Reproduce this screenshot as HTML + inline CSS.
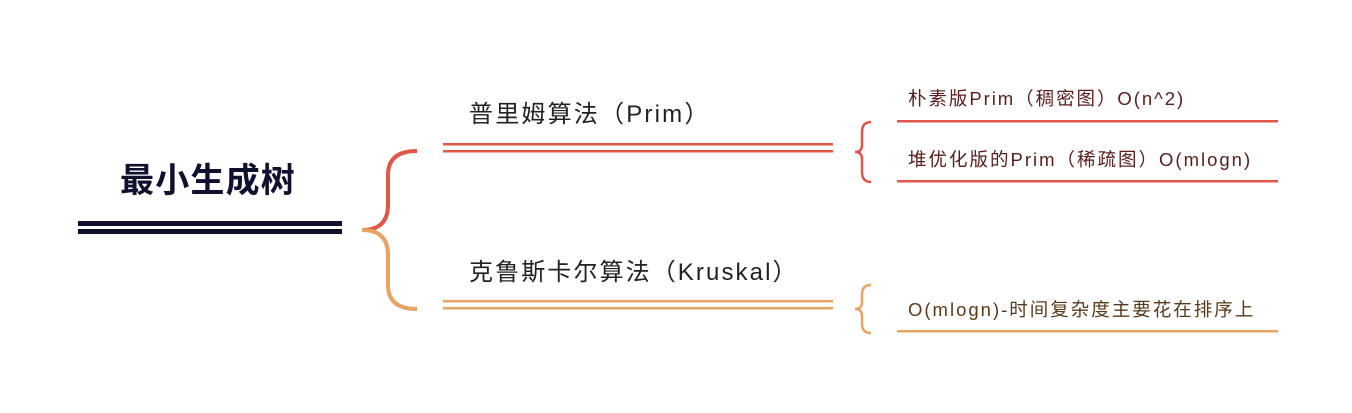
<!DOCTYPE html>
<html><head><meta charset="utf-8"><style>
body{margin:0;width:1352px;height:413px;background:#fff;position:relative;overflow:hidden;font-family:"Liberation Sans","Noto Sans CJK SC",sans-serif}
.t{position:absolute;white-space:nowrap;line-height:1}
</style></head><body>
<svg width="1352" height="413" style="position:absolute;left:0;top:0">
<rect x="78" y="221" width="264" height="5" fill="#10112e"/>
<rect x="78" y="229" width="264" height="5" fill="#10112e"/>
<path d="M362 230 Q388 230 388 205 L388 175 Q388 151 417 151" fill="none" stroke="#e0574a" stroke-width="4"/>
<path d="M362 230 Q388 230 388 255 L388 285 Q388 309 417 309" fill="none" stroke="#e8a462" stroke-width="4"/>
<rect x="443" y="143" width="390" height="2.5" fill="#e0574a"/>
<rect x="443" y="150" width="390" height="2.5" fill="#e0574a"/>
<rect x="443" y="300" width="390" height="2.5" fill="#e8a462"/>
<rect x="443" y="307" width="390" height="2.5" fill="#e8a462"/>
<path d="M871 122 Q862 122 862 132 L862 145 Q862 152 855 152 Q862 152 862 159 L862 172 Q862 182 871 182" fill="none" stroke="#e0574a" stroke-width="2.5"/>
<path d="M871 285 Q862 285 862 294 L862 302 Q862 309 855 309 Q862 309 862 316 L862 324 Q862 333 871 333" fill="none" stroke="#e8a462" stroke-width="2.5"/>
<rect x="897" y="120" width="381" height="2.5" fill="#e0574a"/>
<rect x="897" y="180" width="381" height="2.5" fill="#e0574a"/>
<rect x="897" y="330" width="381" height="2.5" fill="#e8a462"/>
</svg>
<div class="t" style="left:120px;top:164px;font-size:34px;font-weight:bold;color:#10112e;letter-spacing:1.2px">最小生成树</div>
<div class="t" style="left:469px;top:103px;font-size:24px;color:#222;letter-spacing:2.2px">普里姆算法（Prim）</div>
<div class="t" style="left:469px;top:261px;font-size:24px;color:#222;letter-spacing:2.1px">克鲁斯卡尔算法（Kruskal）</div>
<div class="t" style="left:908px;top:90px;font-size:18.5px;color:#5a1c1c;letter-spacing:1.95px">朴素版Prim（稠密图）O(n^2)</div>
<div class="t" style="left:908px;top:151px;font-size:18.5px;color:#5a1c1c;letter-spacing:2px">堆优化版的Prim（稀疏图）O(mlogn)</div>
<div class="t" style="left:908px;top:301px;font-size:18.5px;color:#5a3a1a;letter-spacing:2px">O(mlogn)-时间复杂度主要花在排序上</div>
</body></html>
